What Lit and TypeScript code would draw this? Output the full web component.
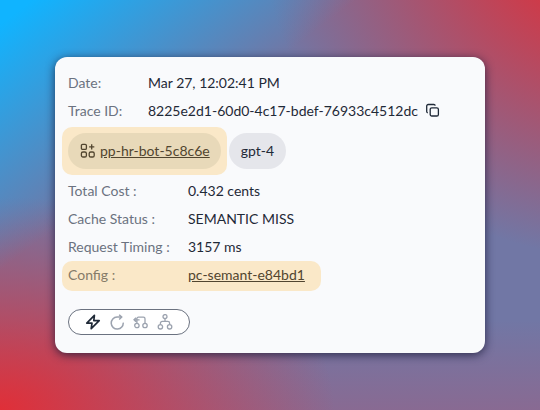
import { LitElement, html, css, svg } from "lit";
import { customElement } from "lit/decorators.js";

const appsIcon = svg`
  <rect x="1.4" y="1.4" width="5" height="5" rx="1.2"></rect>
  <rect x="1.4" y="9" width="5" height="5" rx="1.6"></rect>
  <rect x="9.2" y="9" width="5" height="5" rx="1.6"></rect>
  <path d="M11.7 1.2v5.2M9.1 3.8h5.2"></path>`;

const copyIcon = svg`
  <rect x="4.2" y="4.8" width="8.2" height="8.2" rx="1.6"></rect>
  <path d="M1.8 9.9A1.5 1.5 0 0 1 0.7 8.5V3A1.5 1.5 0 0 1 2.2 1.5H7.8A1.5 1.5 0 0 1 9.3 2.6"></path>`;

const boltIcon = svg`<path d="M9.4 1.4L1.8 9.2H7L6.2 14.6L14.2 6.6H8.8Z" stroke-linejoin="round" stroke-width="1.7"></path>`;

const retryIcon = svg`
  <path d="M12.4 3.1H8A6 6 0 1 0 14.2 8.6" stroke-width="1.5"></path>
  <path d="M10.2 0.7L12.7 3.1L10.2 5.5" stroke-width="1.5"></path>`;

const fallbackIcon = svg`
  <circle cx="3.9" cy="11.5" r="2.2"></circle>
  <circle cx="12" cy="11.5" r="2.2"></circle>
  <path d="M3.9 9.3V4.8A1.6 1.6 0 0 1 5.5 3.1H10.4A1.6 1.6 0 0 1 12 4.7V9.3M1 5.8H6.6M3 3.8L1 5.8L3 7.8"></path>`;

const balanceIcon = svg`
  <circle cx="8" cy="2.6" r="2"></circle>
  <circle cx="3.4" cy="12.8" r="2.2"></circle>
  <circle cx="12.6" cy="12.8" r="2.2"></circle>
  <path d="M8 4.6V7.4M3.4 10.6V9.2A1.8 1.8 0 0 1 5.2 7.4H10.8A1.8 1.8 0 0 1 12.6 9.2V10.6"></path>`;

@customElement("app-root")
export class AppRoot extends LitElement {
  static styles = css`
    :host {
      display: flex;
      align-items: center;
      box-sizing: border-box;
      min-height: 100vh;
      padding: 32px 55px;
      background:
        linear-gradient(to bottom right, #10b4ff 3%, rgba(16, 180, 255, 0) 33%),
        radial-gradient(62% 52% at 0% 100%, #e02f38 0%, rgba(224, 47, 56, 0) 100%),
        radial-gradient(67% 83% at 115% -20%, #cd3b4a 33%, rgba(205, 59, 74, 0) 100%),
        linear-gradient(to top, rgba(220, 60, 80, 0.22), rgba(220, 60, 80, 0) 22%),
        #7177a5;
      color: #1f2937;
      font: 14px/20px Lato, sans-serif;
    }
    .card {
      flex: 1;
      min-width: 0;
      box-sizing: border-box;
      padding: 12px 13px 18px;
      border-radius: 12px;
      background: #f9fafc;
      box-shadow: 0 2px 10px rgba(20, 20, 50, 0.75);
    }
    dl {
      margin: 0;
    }
    .row {
      display: flex;
      align-items: center;
      padding: 4px 0;
    }
    dt {
      flex: none;
      width: 120px;
      color: #6b7280;
    }
    .head dt {
      width: 80px;
    }
    dd {
      display: flex;
      align-items: center;
      gap: 8px;
      margin: 0;
    }
    a {
      color: inherit;
      text-decoration: underline;
    }
    svg {
      display: block;
      fill: none;
      stroke: currentColor;
      stroke-width: 1.3;
    }
    button {
      display: block;
      padding: 0;
      border: 0;
      background: none;
      color: inherit;
    }
    .tags {
      display: flex;
      align-items: center;
      gap: 2px;
      margin: 2px 0 2px -6px;
    }
    .mark {
      border-radius: 10px;
      background: #fae8c8;
      color: #51452f;
    }
    .tags .mark {
      padding: 6px;
    }
    .tag {
      display: flex;
      align-items: center;
      gap: 4px;
      padding: 8px 12px;
      border-radius: 18px;
      background: #e5e6eb;
    }
    .mark .tag {
      padding-right: 11px;
      background: #e8d9b9;
    }
    .config {
      width: fit-content;
      margin-left: -6px;
      padding: 4px 16px 6px 6px;
    }
    .config dt {
      color: #857b68;
    }
    .modes {
      display: flex;
      align-items: center;
      gap: 8px;
      width: fit-content;
      margin-top: 18px;
      padding: 4px 16px;
      border: 1px solid #6b7280;
      border-radius: 13px;
      background: #fff;
      color: #9ca3af;
    }
    .modes .on {
      color: #1f2937;
    }
  `;

  private icon(shape: unknown) {
    return html`<svg width="16" height="16" viewBox="0 0 16 16" aria-hidden="true">${shape}</svg>`;
  }

  private mode(label: string, shape: unknown, on = false) {
    return html`<button type="button" class=${on ? "on" : ""} aria-label=${label} aria-pressed=${on}>
      ${this.icon(shape)}
    </button>`;
  }

  private row(label: string, value: unknown) {
    return html`<div class="row"><dt>${label}</dt><dd>${value}</dd></div>`;
  }

  render() {
    return html`
      <main class="card">
        <dl class="head">
          ${this.row("Date:", "Mar 27, 12:02:41 PM")}
          ${this.row(
            "Trace ID:",
            html`8225e2d1-60d0-4c17-bdef-76933c4512dc
              <button type="button" aria-label="Copy trace ID">${this.icon(copyIcon)}</button>`
          )}
        </dl>
        <div class="tags">
          <div class="mark">
            <div class="tag">${this.icon(appsIcon)}<a href="#prompt">pp-hr-bot-5c8c6e</a></div>
          </div>
          <div class="tag">gpt-4</div>
        </div>
        <dl>
          ${this.row("Total Cost :", "0.432 cents")}
          ${this.row("Cache Status :", "SEMANTIC MISS")}
          ${this.row("Request Timing :", "3157 ms")}
          <div class="row mark config">
            <dt>Config :</dt>
            <dd><a href="#config">pc-semant-e84bd1</a></dd>
          </div>
        </dl>
        <div class="modes" role="group" aria-label="Request features">
          ${this.mode("Cache", boltIcon, true)} ${this.mode("Retry", retryIcon)}
          ${this.mode("Fallback", fallbackIcon)} ${this.mode("Load balance", balanceIcon)}
        </div>
      </main>
    `;
  }
}
